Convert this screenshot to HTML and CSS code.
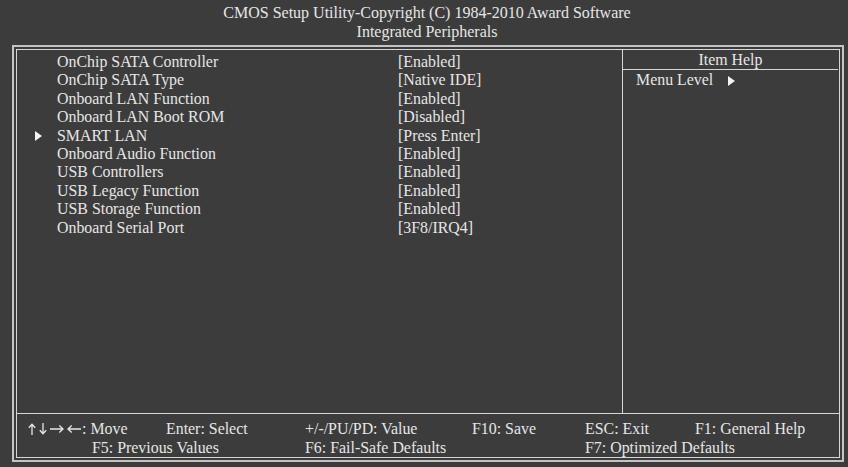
FILE: index.html
```html
<!DOCTYPE html>
<html lang="en">
<head>
  <meta charset="UTF-8" />
  <title>CMOS Setup Utility - Integrated Peripherals</title>
  <link rel="stylesheet" href="styles.css">
</head>
<body>

  <header class="title">
    <div>CMOS Setup Utility-Copyright (C) 1984-2010 Award Software</div>
    <div>Integrated Peripherals</div>
  </header>

  <div class="frame">
    <div class="panel">
      <div class="main">
        <div class="items">
          <div class="row"><span class="mark"></span><span class="name">OnChip SATA Controller</span><span class="value">[Enabled]</span></div>
          <div class="row"><span class="mark"></span><span class="name">OnChip SATA Type</span><span class="value">[Native IDE]</span></div>
          <div class="row"><span class="mark"></span><span class="name">Onboard LAN Function</span><span class="value">[Enabled]</span></div>
          <div class="row"><span class="mark"></span><span class="name">Onboard LAN Boot ROM</span><span class="value">[Disabled]</span></div>
          <div class="row"><span class="mark"><i class="tri"></i></span><span class="name">SMART LAN</span><span class="value">[Press Enter]</span></div>
          <div class="row"><span class="mark"></span><span class="name">Onboard Audio Function</span><span class="value">[Enabled]</span></div>
          <div class="row"><span class="mark"></span><span class="name">USB Controllers</span><span class="value">[Enabled]</span></div>
          <div class="row"><span class="mark"></span><span class="name">USB Legacy Function</span><span class="value">[Enabled]</span></div>
          <div class="row"><span class="mark"></span><span class="name">USB Storage Function</span><span class="value">[Enabled]</span></div>
          <div class="row"><span class="mark"></span><span class="name">Onboard Serial Port</span><span class="value">[3F8/IRQ4]</span></div>
        </div>
        <div class="help">
          <div class="help-title">Item Help</div>
          <div class="help-body">Menu Level <i class="tri level"></i></div>
        </div>
      </div>
      <div class="keys">
        <div class="keyrow">
          <span class="k1"><svg class="arrows" width="54" height="12" viewBox="0 0 54 12" fill="none" stroke="#e6e6e6" stroke-width="1.3">
              <path d="M4 1.5V12M0.8 4.8L4 1.3L7.2 4.8"/>
              <path d="M15 0V10.5M11.8 7.2L15 10.7L18.2 7.2"/>
              <path d="M22 6H35M31.3 2.6L35 6L31.3 9.4"/>
              <path d="M53 6H40M43.7 2.6L40 6L43.7 9.4"/>
            </svg>: Move</span>
          <span class="k2">Enter: Select</span>
          <span class="k3">+/-/PU/PD: Value</span>
          <span class="k4">F10: Save</span>
          <span class="k5">ESC: Exit</span>
          <span class="k6">F1: General Help</span>
        </div>
        <div class="keyrow">
          <span class="k1b">F5: Previous Values</span>
          <span class="k3b">F6: Fail-Safe Defaults</span>
          <span class="k5b">F7: Optimized Defaults</span>
        </div>
      </div>
    </div>
  </div>

</body>
</html>
```

FILE: styles.css
```css
body {
  margin: 0;
  background-color: #3c3c3c;
  color: #e6e6e6;
  font-family: "Liberation Serif", "Times New Roman", serif;
  font-size: 15.9px;
  width: 848px;
  height: 467px;
  overflow: hidden;
}

.title {
  height: 45px;
  text-align: center;
  line-height: 19px;
  padding: 3px 0 0 6px;
  box-sizing: border-box;
  font-size: 16px;
}

.frame {
  margin-left: 12px;
  width: 832px;
  height: 417px;
  box-sizing: border-box;
  border: 2px solid #c4c4c4;
  padding: 2px;
}

.panel {
  height: 100%;
  box-sizing: border-box;
  border: 1px solid #d6d6d6;
  display: flex;
  flex-direction: column;
}

.main {
  height: 364px;
  display: flex;
  border-bottom: 1px solid #d6d6d6;
}

.items {
  width: 605px;
  padding-top: 3px;
  border-right: 1px solid #d6d6d6;
}

.row {
  display: flex;
  height: 18.4px;
  line-height: 18.4px;
}

.mark {
  width: 40px;
  padding-left: 18px;
  box-sizing: border-box;
  display: flex;
  align-items: center;
}

.tri {
  display: inline-block;
  width: 0;
  height: 0;
  border-top: 5px solid transparent;
  border-bottom: 5px solid transparent;
  border-left: 7px solid #f4f4f4;
}

.name {
  width: 341px;
}

.help {
  flex: 1;
}

.help-title {
  height: 19px;
  line-height: 20px;
  text-align: center;
  border-bottom: 1px solid #d6d6d6;
  margin-right: 1px;
}

.help-body {
  padding-left: 13px;
  line-height: 20px;
}

.tri.level {
  margin-left: 11px;
  vertical-align: -1px;
}

.keys {
  flex: 1;
  padding-top: 5px;
}

.keyrow {
  display: flex;
  height: 19px;
  line-height: 19px;
  white-space: nowrap;
}

.arrows {
  vertical-align: -1px;
}

.k1 { width: 138px; padding-left: 11px; }
.k2 { width: 139px; }
.k3 { width: 167px; }
.k4 { width: 113px; }
.k5 { width: 110px; }

.k1b { width: 213px; padding-left: 75px; }
.k3b { width: 280px; }
```
